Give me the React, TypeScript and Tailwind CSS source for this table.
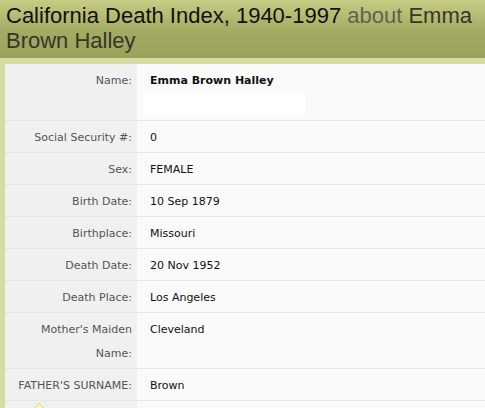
import React from "react";

const rows: { label: string; value: string }[] = [
  { label: "Social Security #:", value: "0" },
  { label: "Sex:", value: "FEMALE" },
  { label: "Birth Date:", value: "10 Sep 1879" },
  { label: "Birthplace:", value: "Missouri" },
  { label: "Death Date:", value: "20 Nov 1952" },
  { label: "Death Place:", value: "Los Angeles" },
  { label: "Mother's Maiden Name:", value: "Cleveland" },
  { label: "FATHER'S SURNAME:", value: "Brown" },
];

export default function App() {
  return (
    <div className="relative w-[485px] h-[408px] overflow-hidden bg-[#d5dba1]">
      <div className="bg-[linear-gradient(to_bottom,#c7cc84_0%,#a3aa62_55%,#9aa15a_100%)] h-[58px] pl-[6px] pt-[3px] font-['Liberation_Sans',Arial,sans-serif] text-[22px] leading-[25px]">
        <span className="text-[#111111]">California Death Index, 1940-1997 </span>
        <span className="text-[#62634f]">about </span>
        <span className="text-[#36372a]">Emma Brown Halley</span>
      </div>
      <div className="ml-[5px] mt-[6px] font-['DejaVu_Sans',Verdana,sans-serif] text-[11px] leading-[24px] bg-[#fafafa]">
        <div className="flex border-b border-[#e6e6e6]">
          <div className="w-[132px] shrink-0 bg-[#f0f0f0] text-right pr-[5px] pt-[5px] pb-[2px] text-[#555555]">
            Name:
          </div>
          <div className="flex-1 pl-[13px] pt-[5px] pb-[5px]">
            <div className="font-bold text-[#111111]">Emma Brown Halley</div>
            <div className="ml-[-6px] w-[161px] h-[22px] bg-white"></div>
          </div>
        </div>
        {rows.map((r) => (
          <div key={r.label} className="flex border-b border-[#e6e6e6]">
            <div className="w-[132px] shrink-0 bg-[#f0f0f0] text-right pr-[5px] pl-[4px] pt-[5px] pb-[2px] text-[#555555]">
              {r.label}
            </div>
            <div className="flex-1 pl-[13px] pt-[5px] pb-[2px] text-[#111111]">{r.value}</div>
          </div>
        ))}
        <div className="flex h-[40px]">
          <div className="w-[132px] shrink-0 bg-[#f0f0f0]"></div>
          <div className="flex-1"></div>
        </div>
      </div>
      <svg className="absolute left-[30px] top-[402px]" width="18" height="10" viewBox="0 0 18 10">
        <polygon points="9,1 17,10 1,10" fill="#fdf4bd" stroke="#e3cf86" strokeWidth="1" />
      </svg>
    </div>
  );
}
